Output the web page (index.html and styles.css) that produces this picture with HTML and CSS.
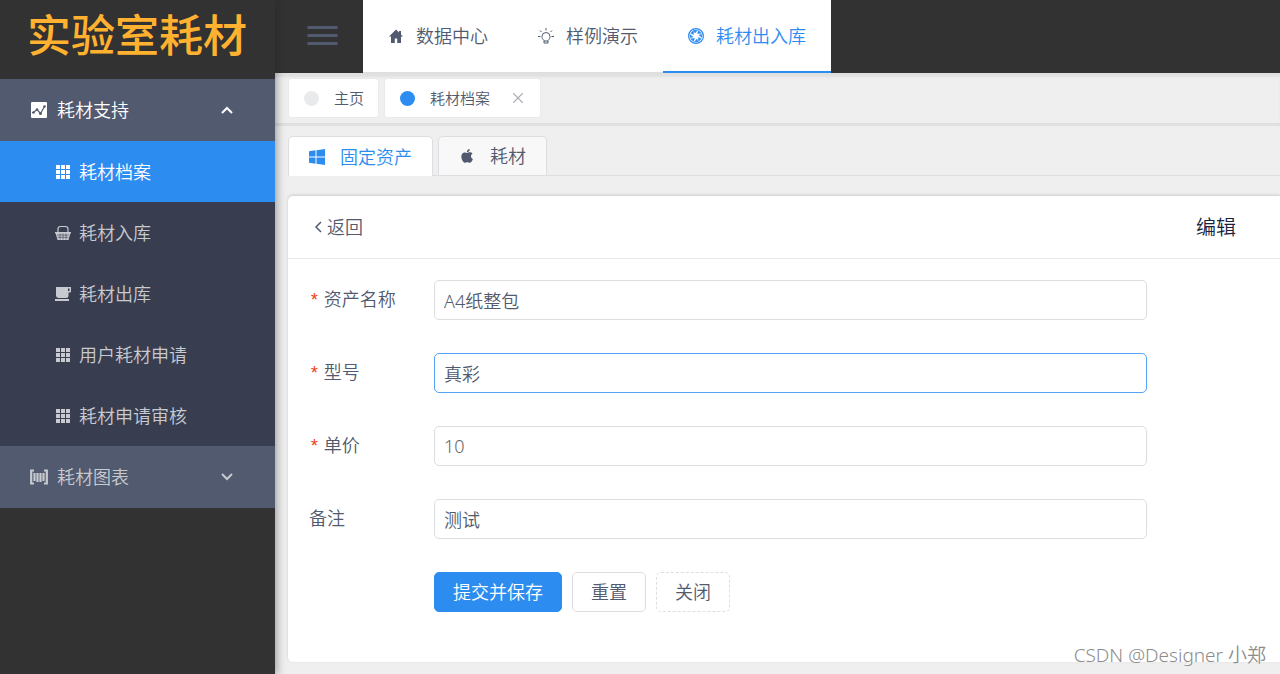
FILE: index.html
```html
<!DOCTYPE html>
<html lang="zh-CN">
<head>
<meta charset="utf-8">
<title>实验室耗材</title>
<link rel="stylesheet" href="styles.css">
</head>
<body>
<svg class="defs" aria-hidden="true">
  <symbol id="grid" viewBox="0 0 14 14"><path d="M0 0h4v4H0zM5 0h4v4H5zM10 0h4v4h-4zM0 5h4v4H0zM5 5h4v4H5zM10 5h4v4h-4zM0 10h4v4H0zM5 10h4v4H5zM10 10h4v4h-4z" fill="currentColor"/></symbol>
</svg>
<div class="app">
  <aside class="sidebar">
    <h1 class="logo">实验室耗材</h1>
    <nav class="menu">
      <button class="group open" type="button">
        <svg class="icon" viewBox="0 0 16 16"><rect width="16" height="16" rx="1" fill="currentColor"/><path d="M1 10.500L2.500 10.500 6 7.500 9.500 11.500 13.500 4.500" fill="none" stroke="#515a6e" stroke-width="1.200"/><g fill="#515a6e"><circle cx="2.500" cy="10.500" r="1.300"/><circle cx="6" cy="7.500" r="1.300"/><circle cx="9.500" cy="11.500" r="1.500"/><circle cx="13.500" cy="4.500" r="1.300"/></g></svg>
        <span>耗材支持</span>
        <svg class="arrow" viewBox="0 0 12 12"><path d="M1 9l5-5 5 5" fill="none" stroke="currentColor" stroke-width="2"/></svg>
      </button>
      <a class="item active" href="#"><svg class="icon small"><use href="#grid"/></svg><span>耗材档案</span></a>
      <a class="item" href="#"><svg class="icon" viewBox="0 0 16 16"><path d="M3 7V4q0-2.500 2.500-2.500h5Q13 1.500 13 4v3" fill="none" stroke="currentColor" stroke-width="1.200"/><path d="M0 7h16v1.500h-.7L13.500 15h-11L.7 8.500H0z" fill="currentColor"/><path d="M2 10h12M2.500 12.300h11M5 8.500v6M8 8.500v6M11 8.500v6" stroke="#383e50" stroke-width=".6"/></svg><span>耗材入库</span></a>
      <a class="item" href="#"><svg class="icon" viewBox="0 0 16 16"><path d="M1 1h15v4.500q0 1-1 1h-1.500V9.500q0 2.500-2.500 2.500H4q-3 0-3-3zM13 2.500v2.500h1.500V2.500zM0 13h14v2H0z" fill="currentColor" fill-rule="evenodd"/></svg><span>耗材出库</span></a>
      <a class="item" href="#"><svg class="icon small"><use href="#grid"/></svg><span>用户耗材申请</span></a>
      <a class="item" href="#"><svg class="icon small"><use href="#grid"/></svg><span>耗材申请审核</span></a>
      <button class="group" type="button">
        <svg class="icon wide" viewBox="0 0 18 16"><path d="M4 1.500H1.200v13H4M14 1.500h2.800v13H14" fill="none" stroke="currentColor" stroke-width="2.200"/><path d="M4.500 4v8M7.500 4v9M10.500 4v9M13.500 4v8" stroke="currentColor" stroke-width="2.200"/></svg>
        <span>耗材图表</span>
        <svg class="arrow" viewBox="0 0 12 12"><path d="M1 3l5 5 5-5" fill="none" stroke="currentColor" stroke-width="2"/></svg>
      </button>
    </nav>
  </aside>

  <div class="main">
    <header class="topbar">
      <button class="toggle" type="button" aria-label="菜单"><svg viewBox="0 0 30 20"><path d="M0 1.500h30M0 9.500h30M0 17.500h30" stroke="#515a6e" stroke-width="3"/></svg></button>
      <nav class="topnav">
        <a href="#"><svg class="icon" viewBox="0 0 16 16"><path d="M8 1.500L1 8.500h2V15h3.800v-4.500h2.400V15H13V8.500h2l-2-2V3h-2v1.500z" fill="currentColor"/></svg><span>数据中心</span></a>
        <a href="#"><svg class="icon" viewBox="0 0 16 16"><path d="M6 15v-2.500C4.500 11 4 10 4 8.500a4 4 0 0 1 8 0c0 1.500-.5 2.500-2 4V15zM6 13h4M8 0v2.500M2 2.500l1.500 1.500M14 2.500L12.500 4M0 8.500h2.500M13.500 8.500H16" fill="none" stroke="currentColor"/></svg><span>样例演示</span></a>
        <a class="current" href="#"><svg class="icon" viewBox="0 0 16 16"><circle cx="8" cy="8" r="7.400" fill="none" stroke="currentColor" stroke-width="1.200"/><path d="M5.500 2.300L9.500 2 7 5zM10.500 2.500l3 2.800-4 .2zM13.800 6.500l.2 3-3-2.500zM13.300 10.800l-2.800 2.700v-4zM10 13.900L6.500 14 9 11zM5.500 13.500l-3-2.800 4-.2zM2.200 9.500L2 6.500 5 9zM2.700 5.200l2.800-2.700v4z" fill="currentColor" stroke="currentColor" stroke-width=".5"/></svg><span>耗材出入库</span></a>
      </nav>
    </header>

    <div class="tags">
      <a class="tag" href="#"><i class="dot"></i><span>主页</span></a>
      <div class="tag"><i class="dot on"></i><span>耗材档案</span><button class="close" type="button" aria-label="关闭标签"><svg viewBox="0 0 10 10"><path d="M0 0l10 10M10 0L0 10" stroke="#a5a8ae" stroke-width="1.200"/></svg></button></div>
    </div>

    <main class="content">
      <div class="tabs" role="tablist">
        <button class="tab selected" role="tab" aria-selected="true" type="button"><svg class="icon" viewBox="0 0 16 16"><path d="M0 2.300L6.500 1.300V7.500H0zM7.500 1.200L16 0v7.500H7.500zM0 8.500h6.500v6.200L0 13.700zM7.500 8.500H16V16l-8.500-1.200z" fill="currentColor"/></svg><span>固定资产</span></button>
        <button class="tab" role="tab" aria-selected="false" type="button"><svg class="icon" viewBox="0 0 16 16"><path d="M10.800 1c.1 1.700-1.300 3.200-2.900 3.200C7.700 2.700 9.200 1.200 10.800 1zM8.200 5c.8 0 1.500-.8 2.800-.7 1 0 1.900.5 2.500 1.400-2.200 1.400-1.900 4.300.4 5.200C13.200 12.800 12 14.800 10.700 14.800c-1 0-1.400-.6-2.500-.6s-1.500.6-2.400.6C3.900 14.800 1 9 3.100 6 4.500 3.900 6.700 4.300 8.200 5z" fill="currentColor"/></svg><span>耗材</span></button>
      </div>

      <section class="card">
        <div class="card-head">
          <a class="back" href="#"><svg viewBox="0 0 8 12"><path d="M7 1L2 6l5 5" fill="none" stroke="currentColor" stroke-width="1.500"/></svg><span>返回</span></a>
          <h2>编辑</h2>
        </div>
        <form class="form">
          <label class="required" for="name">资产名称</label><input id="name" type="text" value="A4纸整包">
          <label class="required" for="model">型号</label><input id="model" class="focused" type="text" value="真彩">
          <label class="required" for="price">单价</label><input id="price" class="price" type="text" value="10">
          <label for="remark">备注</label><input id="remark" type="text" value="测试">
          <div class="actions">
            <button class="btn primary" type="button">提交并保存</button>
            <button class="btn" type="reset">重置</button>
            <button class="btn dashed" type="button">关闭</button>
          </div>
        </form>
      </section>
    </main>
  </div>
  <div class="watermark">CSDN @Designer 小郑</div>
</div>
</body>
</html>
```
FILE: styles.css
```css
* { box-sizing: border-box; }
body {
  margin: 0;
  background: #efefef;
  color: #515a6e;
  font: 350 18px/24px "Noto Sans", "Noto Sans CJK SC", sans-serif;
}
a { color: inherit; text-decoration: none; }
button, input { font: inherit; color: inherit; }
button { border: 0; background: none; padding: 0; cursor: pointer; }
svg { display: block; flex: none; }
.defs { position: absolute; width: 0; height: 0; }
.icon { width: 16px; height: 16px; }
.app { position: relative; display: flex; min-height: 100vh; overflow: hidden; }

.sidebar {
  position: relative;
  z-index: 1;
  flex: 0 0 275px;
  background: #323232;
  box-shadow: 2px 0 8px rgba(29, 35, 41, 0.4);
}
.logo {
  margin: 0;
  height: 79px;
  padding: 3px 0 0 27px;
  color: #ffb12f;
  font: 500 44px/60px "Noto Sans CJK SC", sans-serif;
  white-space: nowrap;
}
.menu { display: flex; flex-direction: column; }
.group, .item { display: flex; align-items: center; color: #c8cad0; }
.group {
  height: 62px;
  padding: 0 42px 0 31px;
  gap: 10px;
  background: #515a6e;
  text-align: left;
}
.group.open { color: #fff; }
.group span { flex: 1; }
.arrow { width: 12px; height: 12px; }
.wide { width: 18px; margin-left: -1px; margin-right: -1px; }
.item { height: 61px; padding-left: 55px; gap: 8px; background: #383e50; }
.item.active { background: #2d8cf0; color: #fff; }
.small { padding: 1px; }

.main { flex: 1; min-width: 0; }
.topbar { display: flex; height: 73px; background: #323232; }
.toggle { width: 88px; padding: 0 26px 2px 32px; }
.toggle svg { width: 31px; height: 20px; }
.topnav { display: flex; background: #fff; }
.topnav a {
  display: flex;
  align-items: center;
  gap: 12px;
  padding: 0 25px;
  border-bottom: 1px solid #dcdee2;
}
.topnav a.current { color: #2d8cf0; border-bottom: 2px solid #2d8cf0; }

.tags {
  display: flex;
  gap: 5px;
  height: 53px;
  padding: 4px 13px 8px;
  border-top: 1px solid #e0e0e0;
  border-bottom: 3px solid #e0e0e0;
  box-shadow: inset 0 3px 2px #e0e0e0;
  font-size: 15px;
}
.tag {
  display: flex;
  align-items: center;
  height: 40px;
  padding: 0 14px 0 15px;
  border: 1px solid #e8eaec;
  border-radius: 3px;
  background: #fff;
}
.dot { width: 15px; height: 15px; margin-right: 15px; border-radius: 50%; background: #e8eaec; }
.dot.on { background: #2d8cf0; }
.close { margin-left: 23px; margin-right: 3px; }
.close svg { width: 10px; height: 10px; }

.content { padding: 10px 0 13px 13px; }
.tabs { display: flex; gap: 5px; height: 40px; border-bottom: 1px solid #dcdee2; }
.tab {
  display: flex;
  align-items: center;
  height: 39px;
  padding: 0 20px;
  gap: 15px;
  border: 1px solid #dcdee2;
  border-bottom: 0;
  border-radius: 5px 5px 0 0;
  background: #f8f8f8;
}
.tab.selected { height: 40px; background: #fff; color: #2d8cf0; }

.card {
  margin-top: 20px;
  border-radius: 5px 0 0 5px;
  background: #fff;
  box-shadow: 0 -1px 3px rgba(0, 0, 0, 0.15);
}
.card-head {
  display: flex;
  align-items: center;
  justify-content: space-between;
  height: 63px;
  padding: 0 44px 0 26px;
  border-bottom: 1px solid #e8eaec;
}
.back { display: flex; align-items: center; gap: 5px; }
.back svg { width: 8px; height: 12px; }
.card-head h2 { margin: 0; padding-top: 2px; color: #17233d; font-size: 20px; font-weight: 350; }

.form {
  display: grid;
  grid-template-columns: 112px 1fr;
  grid-auto-rows: 40px;
  column-gap: 13px;
  row-gap: 33px;
  padding: 21px 133px 50px 21px;
}
.form label { line-height: 38px; }
.required::before {
  content: "*";
  margin-right: 4px;
  color: #ed4014;
  font-family: "Liberation Mono", monospace;
  line-height: 16px;
}
.form input {
  width: 100%;
  height: 40px;
  padding: 0 9px;
  border: 1px solid #dcdee2;
  border-radius: 5px;
  background: #fff;
  outline: 0;
}
.form input.focused { border-color: #57a3f3; }
.form input.price { color: #666; }
.actions { grid-column: 2; display: flex; gap: 10px; }
.btn { height: 40px; padding: 0 18px; border: 1px solid #dcdee2; border-radius: 5px; background: #fff; }
.btn.primary { border-color: #2d8cf0; background: #2d8cf0; color: #fff; }
.btn.dashed { border-style: dashed; }

.watermark {
  position: absolute;
  right: 14px;
  bottom: 8px;
  color: #8c8c8c;
  font-size: 19px;
  text-shadow: -1px -1px 0 #fff;
}
```
